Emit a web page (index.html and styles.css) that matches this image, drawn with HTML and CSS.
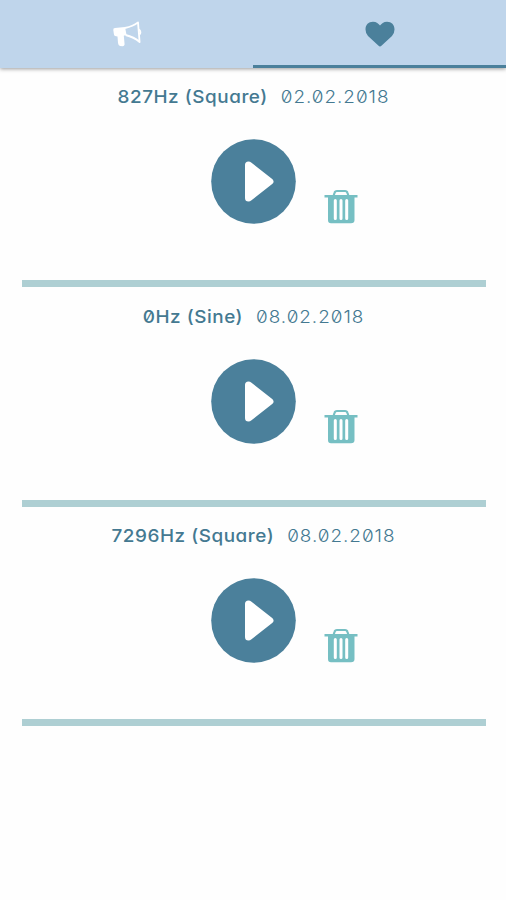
FILE: index.html
```html
<!DOCTYPE html>
<html lang="en">
<head>
<meta charset="utf-8">
<title>Saved tones</title>
<link rel="stylesheet" href="styles.css">
</head>
<body>
<svg class="symbols" aria-hidden="true">
  <symbol id="play" viewBox="0 0 85 85">
    <circle cx="42.5" cy="42.5" r="42.3" fill="#4b809b"/>
    <path d="M34 26Q34 22.5 37.5 22.5Q39 22.5 40.5 23.7L61.500 40.2Q63.700 42.5 61.500 44.8L40.5 61.3Q39 62.5 37.5 62.5Q34 62.5 34 59Z" fill="#fff"/>
  </symbol>
  <symbol id="trash" viewBox="0 0 34 35">
    <path fill="none" stroke="#76bfc3" stroke-width="2.2" d="M9.500 7L10.500 4Q11 2 13 2H21Q23 2 23.500 4L24.500 7"/>
    <path fill="#76bfc3" d="M.5 6H33.5V8.500H30.5V31Q30.500 34.300 27 34.300H7Q4 34.300 4 31V8.500H.5Z"/>
    <path stroke="#fff" stroke-width="3" stroke-linecap="round" d="M11.300 11.500V29.500M17 11.500V29.500M22.700 11.500V29.500"/>
  </symbol>
</svg>
<nav class="tabs">
  <a class="tab" aria-label="Sound">
    <svg class="horn" viewBox="0 0 30 27">
      <path fill="#fff" d="M1.300 9Q1 7.300 3 7.100L13 6.100L14.500 13.800L11.800 14.700L12.500 22.200Q13 24.900 10.500 25.200L8 25Q6.300 24.500 6 22L5.500 15.500L3 15Q2 14.800 1.800 12.500Z"/>
      <path fill="none" stroke="#fff" stroke-width="1.800" stroke-linejoin="round" d="M13 7Q21 5.500 26 1.400L27.600 21Q22 16 13.500 14"/>
      <path fill="none" stroke="#fff" stroke-width="1.800" d="M27 8.500Q29.500 11 27.500 13.500"/>
    </svg>
  </a>
  <a class="tab tab-active" aria-label="Favourites">
    <svg class="heart" viewBox="0 0 30 26">
      <path fill="#4b809b" d="M15 25.500Q14.200 25.500 13.300 24.600L3 15Q.5 12 .5 8.500C.5 3.500 3.500 .7 8 .7C11.500 .7 13.500 2.600 15 4.500C16.500 2.600 18.500 .7 22 .7C26.500 .7 29.500 3.500 29.500 8.500Q29.500 12 27 15L16.700 24.600Q15.800 25.500 15 25.500Z"/>
    </svg>
  </a>
</nav>
<main class="list">
  <article class="item">
    <h2 class="heading"><span class="name">827Hz (Square)</span><span class="date">02.02.2018</span></h2>
    <div class="actions"><svg class="play"><use href="#play"/></svg><svg class="trash"><use href="#trash"/></svg></div>
  </article>
  <article class="item">
    <h2 class="heading"><span class="name">0Hz (Sine)</span><span class="date">08.02.2018</span></h2>
    <div class="actions"><svg class="play"><use href="#play"/></svg><svg class="trash"><use href="#trash"/></svg></div>
  </article>
  <article class="item">
    <h2 class="heading"><span class="name">7296Hz (Square)</span><span class="date">08.02.2018</span></h2>
    <div class="actions"><svg class="play"><use href="#play"/></svg><svg class="trash"><use href="#trash"/></svg></div>
  </article>
</main>
</body>
</html>
```
FILE: styles.css
```css
* { box-sizing: border-box; }
body {
  margin: 0;
  background: #fefefe;
  font-family: Inter, "Liberation Sans", sans-serif;
  font-feature-settings: "zero", "cv11";
}
.symbols { display: none; }
.tabs {
  display: flex;
  height: 68px;
  background: #bfd5eb;
  box-shadow: 0 1px 4px rgba(0, 0, 0, .4);
}
.tab {
  flex: 1;
  display: flex;
  justify-content: center;
  padding-top: 21px;
}
.tab-active { border-bottom: 3px solid #4b809b; }
.horn { width: 30px; height: 27px; }
.heart { width: 30px; height: 26px; }
.list { padding: 0 20px 0 22px; }
.item {
  height: 219.4px;
  border-bottom: 7px solid #aecfd3;
}
.heading {
  display: flex;
  justify-content: center;
  gap: 12px;
  margin: 0 1px 0 0;
  padding-top: 17.3px;
  font-size: 17.5px;
  line-height: 24px;
  font-weight: 500;
  color: #447991;
  transform: scaleX(1.08);
}
.name { letter-spacing: .5px; }
.date { font-weight: 300; letter-spacing: .9px; }
.actions {
  display: grid;
  grid-template-columns: 1fr 85px 1fr;
  align-items: end;
  margin: 30px 1px 0 0;
  column-gap: 28px;
}
.play { grid-column: 2; width: 85px; height: 85px; }
.trash { width: 34px; height: 35px; }
```
